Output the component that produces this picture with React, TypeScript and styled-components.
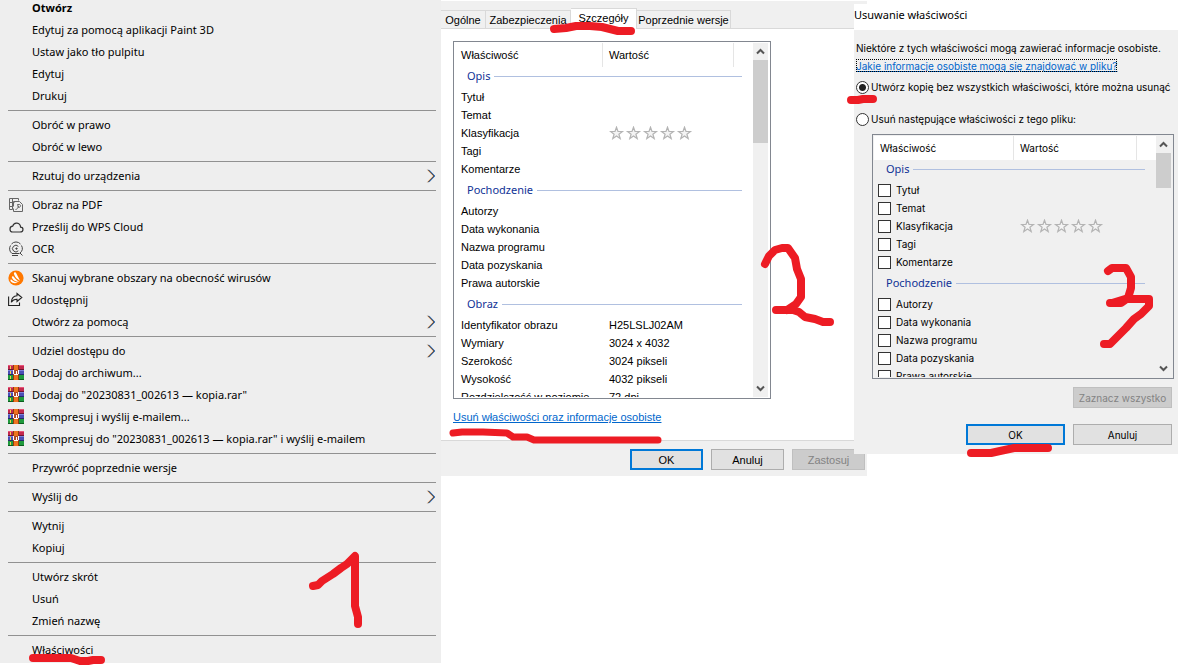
import React, { Fragment } from "react";
import styled, { createGlobalStyle, css } from "styled-components";

const INK = "#ed1c24";
const MENU_FONT = `"Noto Sans", "Open Sans", sans-serif`;
const DIALOG_FONT = `"Liberation Sans", Arial, sans-serif`;
const TAHOMA_FONT = `Inter, "Noto Sans", sans-serif`;

const GlobalStyle = createGlobalStyle`
  *, *::before, *::after { box-sizing: border-box; }
  body { margin: 0; background: #fff; color: #000; }
  button { font: inherit; color: inherit; }
`;

const Desktop = styled.main`
  display: grid;
  grid-template-columns: 441fr 413fr 334fr;
  align-items: start;
  overflow: hidden;
  min-height: 100vh;
`;

/* Hand-drawn marks lie over each window. */
const Marks = styled.svg`
  position: absolute;
  z-index: 3;
  top: 0;
  left: 0;
  overflow: visible;
  pointer-events: none;
  fill: none;
  stroke: ${INK};
  stroke-width: 8;
  stroke-linecap: round;
  stroke-linejoin: round;
`;

/* ---------- Context menu ---------- */

const MenuWindow = styled.section`
  position: relative;
`;

const MenuClip = styled.div`
  overflow: hidden;
  background: #eeeeee;
`;

const MenuList = styled.ul`
  list-style: none;
  margin: -3px 0 0;
  padding: 0 0 2px;
  font: 11px/22px ${MENU_FONT};
`;

const MenuItem = styled.button<{ $bold?: boolean }>`
  display: grid;
  grid-template-columns: 24px 1fr 10px;
  align-items: center;
  width: 100%;
  height: 22px;
  padding: 0 5px 0 8px;
  border: 0;
  background: none;
  text-align: left;
  white-space: nowrap;
  font-weight: ${(p) => (p.$bold ? 700 : 400)};
`;

const IconSlot = styled.span`
  display: flex;
  align-items: center;
  height: 22px;
`;

const Separator = styled.li`
  height: 1px;
  margin: 3px 5px 3px 8px;
  background: #919191;
`;

const PdfIcon = () => (
  <svg width="16" height="16" viewBox="0 0 16 16" fill="none" stroke="#666" strokeWidth="1">
    <path d="M4.500 12.500H1.500V1.500H10.500V3.500M4.500 1.500V12.500M1.500 5.500H6.500M1.500 9.500H4.500" />
    <path d="M5.500 9.500V4.500H11.500L14.500 7.500V14.500H5.500V11.500" />
    <path d="M9.500 7.500H11.500C13.500 8 12.500 10.500 10.500 10.500L9.500 7.500M7.500 12.500C9 12.500 10 11 10.500 9" />
  </svg>
);

const CloudIcon = () => (
  <svg width="16" height="16" viewBox="0 0 16 16" fill="none" stroke="#333" strokeWidth="1.200">
    <path d="M4.600 13H12c3.900 0 3.800-4.600.6-4.800C12.200 3.400 6 2.600 4.700 7.200 1 7.400 1.200 13 4.600 13Z" />
  </svg>
);

const OcrIcon = () => (
  <svg width="16" height="16" viewBox="0 0 16 16" fill="none" stroke="#444" strokeWidth="1">
    <path d="M3.500 3A6 6 0 0 1 12.500 3M2.500 4.500A6 6 0 0 0 4 12.500H11.500M13.500 4.500A6 6 0 0 1 12 12L14.500 14.500M4 14.500H10" />
    <path d="M10.300 5.400A3.300 3.300 0 1 0 10.300 9.800M8.500 6.500V8.700M7.300 7.600H9.700" />
  </svg>
);

const AvastIcon = () => (
  <svg width="16" height="16" viewBox="0 0 16 16">
    <circle cx="8" cy="8" r="7.600" fill="#ff7800" />
    <path d="M6.300 2.600c.8-.6 1.500-.2 1.900.6l3.900 7.500c-2.700-1-5-3.500-5.900-6.100-.3-.9-.4-1.500.1-2Z" fill="#fff" />
    <path d="M4.200 6.400c.6-.4 1.200-.2 1.600.4 1.200 2.200 3 3.800 5.400 4.800-3.100.3-5.700-.9-7-3.300-.4-.8-.5-1.500 0-1.900Z" fill="#fff" />
    <path d="M2.500 9.900c.3-.5.900-.4 1.300 0 1.700 1.700 3.600 2.400 6 2.500-2.400 1.300-5.300 1-6.900-.8-.5-.6-.7-1.200-.4-1.700Z" fill="#fff" />
  </svg>
);

const ShareIcon = () => (
  <svg width="16" height="16" viewBox="0 0 16 16" fill="none" stroke="#222" strokeWidth="1.100">
    <path d="M.6 4.500V13.500H11.500V10.500" />
    <path d="M9 1.500L13.800 5.500L9 9.500V7.300C6.300 7.200 4.600 8.200 3.300 10.300C3.500 6.500 5.600 4 9 3.800Z" />
  </svg>
);

const RarIcon = () => (
  <svg width="16" height="16" viewBox="0 0 16 16" shapeRendering="crispEdges">
    <rect y="0" width="16" height="5" fill="#c2284e" />
    <rect y="0" width="16" height="1" fill="#e8557a" />
    <rect y="4" width="16" height="1" fill="#6d1230" />
    <rect y="5" width="16" height="5" fill="#4a4fb5" />
    <rect y="5" width="16" height="1" fill="#7d82dc" />
    <rect y="9" width="16" height="1" fill="#25296f" />
    <rect y="10" width="16" height="5" fill="#1f9a3c" />
    <rect y="14" width="16" height="1" fill="#0c5c1e" />
    <path d="M2.500 1v3M2.500 6v3M2.500 11v3" stroke="#f3d04c" />
    <rect x="5" width="6" height="15" fill="#8c3b12" />
    <rect x="6" width="4" height="15" fill="#ee7420" />
    <rect x="5" y="5" width="6" height="5" fill="#b04a28" />
    <path d="M5.500 5v4M8 6v3M10.500 5v4M6 9.500h4" stroke="#fff" />
  </svg>
);

const Chevron = () => (
  <svg width="10" height="14" viewBox="0 0 10 14" fill="none" strokeWidth="1">
    <path d="M1.500 .8L7.500 7L1.500 13.200" stroke="#e8a050" />
    <path d="M3 .8L9 7L3 13.200" stroke="#3f8fe0" />
    <path d="M2.200 .8L8.200 7L2.200 13.200" stroke="#2a2030" strokeWidth="0.900" />
  </svg>
);

type Entry = { label: string; icon?: () => React.JSX.Element; sub?: boolean; bold?: boolean };

const MENU: Entry[][] = [
  [
    { label: "Otwórz", bold: true },
    { label: "Edytuj za pomocą aplikacji Paint 3D" },
    { label: "Ustaw jako tło pulpitu" },
    { label: "Edytuj" },
    { label: "Drukuj" },
  ],
  [{ label: "Obróć w prawo" }, { label: "Obróć w lewo" }],
  [{ label: "Rzutuj do urządzenia", sub: true }],
  [
    { label: "Obraz na PDF", icon: PdfIcon },
    { label: "Prześlij do WPS Cloud", icon: CloudIcon },
    { label: "OCR", icon: OcrIcon },
  ],
  [
    { label: "Skanuj wybrane obszary na obecność wirusów", icon: AvastIcon },
    { label: "Udostępnij", icon: ShareIcon },
    { label: "Otwórz za pomocą", sub: true },
  ],
  [
    { label: "Udziel dostępu do", sub: true },
    { label: "Dodaj do archiwum...", icon: RarIcon },
    { label: 'Dodaj do "20230831_002613 — kopia.rar"', icon: RarIcon },
    { label: "Skompresuj i wyślij e-mailem...", icon: RarIcon },
    { label: 'Skompresuj do "20230831_002613 — kopia.rar" i wyślij e-mailem', icon: RarIcon },
  ],
  [{ label: "Przywróć poprzednie wersje" }],
  [{ label: "Wyślij do", sub: true }],
  [{ label: "Wytnij" }, { label: "Kopiuj" }],
  [{ label: "Utwórz skrót" }, { label: "Usuń" }, { label: "Zmień nazwę" }],
  [{ label: "Właściwości" }],
];

function ContextMenu() {
  return (
    <MenuWindow>
      <MenuClip>
        <MenuList>
          {MENU.map((group, g) => (
            <Fragment key={g}>
              {g > 0 && <Separator role="separator" />}
              {group.map(({ label, icon: Icon, sub, bold }) => (
                <li key={label}>
                  <MenuItem type="button" $bold={bold}>
                    <IconSlot>{Icon && <Icon />}</IconSlot>
                    <span>{label}</span>
                    {sub && <Chevron />}
                  </MenuItem>
                </li>
              ))}
            </Fragment>
          ))}
        </MenuList>
      </MenuClip>
      <Marks width="441" height="668" viewBox="0 0 441 668" aria-hidden="true">
        <path d="M313 586L318 585L322 581L333 574L341 568L347 564L355 556V606L358 617V624" />
        <path d="M33 658H71L80 661H88L93 660H101" />
      </Marks>
    </MenuWindow>
  );
}

/* ---------- Shared dialog parts ---------- */

const ButtonRow = styled.div`
  display: flex;
  justify-content: flex-end;
  gap: 8px;
`;

const PushButton = styled.button<{ $wide?: boolean; $primary?: boolean }>`
  width: ${(p) => (p.$wide ? 99 : 73)}px;
  height: 21px;
  padding: 0;
  border: ${(p) => (p.$primary ? "2px solid #0078d7" : "1px solid #adadad")};
  background: #e1e1e1;
  white-space: nowrap;
  &:disabled {
    border-color: #bfbfbf;
    background: #cccccc;
    color: #838383;
  }
`;

const ListBox = styled.div<{ $height: number }>`
  display: flex;
  height: ${(p) => p.$height}px;
  padding: 1px 2px 1px 1px;
  border: 1px solid #828790;
  overflow: hidden;
`;

const ListView = styled.div`
  flex: 1;
  min-width: 0;
  overflow: hidden;
`;

const PropertyTable = styled.table<{ $first: number }>`
  width: 100%;
  table-layout: fixed;
  border-collapse: separate;
  border-spacing: 0;
  white-space: nowrap;
  td, th { padding: 0; text-align: left; font-weight: 400; line-height: 18px; }
  td { height: 18px; }
  td + td { padding-left: 6px; }
  thead th {
    height: 24px;
    padding-left: 6px;
    background: #fff;
    border-right: 1px solid #e5e5e5;
  }
  thead th:first-child { width: ${(p) => p.$first}px; }
  thead td { width: 19px; background: #fff; }
`;

const GroupCell = styled.th<{ $height: number; $lift?: boolean }>`
  && { padding: 0 11px 0 12px; }
  height: ${(p) => p.$height}px;
  ${(p) => p.$lift && css`&& { padding-bottom: 3px; }`}
`;

const GroupTitle = styled.span`
  display: flex;
  align-items: center;
  gap: 4px;
  height: 18px;
  color: #0f3296;
  font: 11px/18px ${MENU_FONT};
  &::after {
    content: "";
    flex: 1;
    height: 1px;
    background: #b0c0e0;
  }
`;

const TrackBox = styled.div`
  display: flex;
  flex-direction: column;
  align-items: center;
  width: 15px;
  background: #f0f0f0;
`;

const ArrowButton = styled.button`
  display: flex;
  align-items: center;
  justify-content: center;
  width: 15px;
  height: 17px;
  padding: 0;
  border: 0;
  background: none;
`;

const Thumb = styled.div<{ $size: number }>`
  width: 15px;
  height: ${(p) => p.$size}px;
  margin-bottom: auto;
  background: #cdcdcd;
`;

function Scrollbar({ thumb }: { thumb: number }) {
  return (
    <TrackBox>
      <ArrowButton type="button" aria-label="W górę">
        <svg width="9" height="7" viewBox="0 0 9 7" fill="none" stroke="#555" strokeWidth="2">
          <path d="M1 5.500L4.500 2L8 5.500" />
        </svg>
      </ArrowButton>
      <Thumb $size={thumb} />
      <ArrowButton type="button" aria-label="W dół">
        <svg width="9" height="7" viewBox="0 0 9 7" fill="none" stroke="#555" strokeWidth="2">
          <path d="M1 1.500L4.500 5L8 1.500" />
        </svg>
      </ArrowButton>
    </TrackBox>
  );
}

const StarRow = styled.svg`
  display: block;
`;

function Stars() {
  return (
    <StarRow width="84" height="14" viewBox="0 0 84 14" role="img" aria-label="Brak oceny">
      {[0, 1, 2, 3, 4].map((i) => (
        <path
          key={i}
          transform={`translate(${i * 17} 0)`}
          d="M7.500 1.200L9 5.500H13.400L9.900 8.200L11.200 12.600L7.500 10L3.800 12.600L5.100 8.200L1.600 5.500H6Z"
          fill="#f4f4f4"
          stroke="#b4b4b4"
          strokeWidth="1.200"
        />
      ))}
    </StarRow>
  );
}

type Group = { title: string; rows: [string, React.ReactNode?][] };

const DESCRIPTION: Group = {
  title: "Opis",
  rows: [["Tytuł"], ["Temat"], ["Klasyfikacja", <Stars key="s" />], ["Tagi"], ["Komentarze"]],
};
const ORIGIN: Group = {
  title: "Pochodzenie",
  rows: [["Autorzy"], ["Data wykonania"], ["Nazwa programu"], ["Data pozyskania"], ["Prawa autorskie"]],
};
const IMAGE: Group = {
  title: "Obraz",
  rows: [
    ["Identyfikator obrazu", "H25LSLJ02AM"],
    ["Wymiary", "3024 x 4032"],
    ["Szerokość", "3024 pikseli"],
    ["Wysokość", "4032 pikseli"],
    ["Rozdzielczość w poziomie", "72 dpi"],
  ],
};

const NameCell = styled.td`
  && { padding-left: 6px; }
`;

const CheckCell = styled.td`
  && { padding-left: 4px; }
`;

const CheckLabel = styled.label`
  display: flex;
  align-items: center;
  gap: 5px;
  height: 18px;
`;

const CheckBox = styled.input`
  appearance: none;
  flex: none;
  width: 13px;
  height: 13px;
  margin: 0;
  border: 1px solid #333;
  background: #fff;
  &:checked { background: #333; }
`;

function Properties({ groups, first, checks }: { groups: Group[]; first: number; checks?: boolean }) {
  return (
    <PropertyTable $first={first}>
      <thead>
        <tr>
          <th scope="col">Właściwość</th>
          <th scope="col">Wartość</th>
          <td />
        </tr>
      </thead>
      <tbody>
        {groups.map((group, g) => (
          <Fragment key={group.title}>
            <tr>
              <GroupCell colSpan={3} scope="colgroup" $height={g === 0 ? 21 : 24} $lift={g === 0}>
                <GroupTitle>{group.title}</GroupTitle>
              </GroupCell>
            </tr>
            {group.rows.map(([name, value]) => (
              <tr key={name}>
                {checks ? (
                  <CheckCell>
                    <CheckLabel>
                      <CheckBox type="checkbox" />
                      {name}
                    </CheckLabel>
                  </CheckCell>
                ) : (
                  <NameCell>{name}</NameCell>
                )}
                <td colSpan={2}>{value}</td>
              </tr>
            ))}
          </Fragment>
        ))}
      </tbody>
    </PropertyTable>
  );
}

/* ---------- File properties dialog ---------- */

const PropertiesWindow = styled.section`
  position: relative;
  margin: 1px -13px 0 0;
  background: #f0f0f0;
  font: 11px/16px ${DIALOG_FONT};
`;

const TabBar = styled.div`
  display: flex;
  align-items: flex-end;
  height: 27px;
`;

const Tab = styled.button<{ $width: number; $active?: boolean }>`
  width: ${(p) => p.$width}px;
  height: 18px;
  padding: 0;
  border: 1px solid #d9d9d9;
  border-width: 1px 1px 0 0;
  background: #f0f0f0;
  white-space: nowrap;
  ${(p) =>
    p.$active &&
    css`
      height: 21px;
      margin-bottom: -1px;
      padding-bottom: 2px;
      z-index: 1;
      background: #fff;
    `}
`;

const TabPage = styled.div`
  padding: 12px 96px 15px 12px;
  border: 1px solid #d9d9d9;
  border-width: 1px 0;
  background: #fff;
`;

const RemoveLink = styled.a`
  display: block;
  width: max-content;
  margin-top: 10px;
  color: #0066cc;
  text-decoration: underline;
`;

const PropertiesFooter = styled(ButtonRow)`
  padding: 8px 2px 6px 0;
`;

function PropertiesDialog() {
  return (
    <PropertiesWindow>
      <TabBar role="tablist">
        <Tab type="button" role="tab" $width={45}>Ogólne</Tab>
        <Tab type="button" role="tab" $width={85}>Zabezpieczenia</Tab>
        <Tab type="button" role="tab" aria-selected="true" $width={66} $active>Szczegóły</Tab>
        <Tab type="button" role="tab" $width={94}>Poprzednie wersje</Tab>
      </TabBar>
      <TabPage>
        <ListBox $height={358}>
          <ListView>
            <Properties groups={[DESCRIPTION, ORIGIN, IMAGE]} first={148} />
          </ListView>
          <Scrollbar thumb={83} />
        </ListBox>
        <RemoveLink href="#usun">Usuń właściwości oraz informacje osobiste</RemoveLink>
      </TabPage>
      <PropertiesFooter>
        <PushButton type="button" $primary>OK</PushButton>
        <PushButton type="button">Anuluj</PushButton>
        <PushButton type="button" disabled>Zastosuj</PushButton>
      </PropertiesFooter>
      <Marks width="426" height="475" viewBox="441 1 426 475" aria-hidden="true">
        <path d="M554 29L566 28L576 26H590L602 27L610 29L618 31H631" />
        <path d="M765 264L769 256L775 250L782 248H788L795 258L797 269L801 279V297L796 304L787 310" />
        <path d="M776 310H793L799 312L805 317L815 319L823 322H830" />
        <path d="M453 433L462 432H483L507 433L513 437H527L534 440H658" strokeWidth="7" />
      </Marks>
    </PropertiesWindow>
  );
}

/* ---------- Remove properties dialog ---------- */

const RemoveWindow = styled.section`
  position: relative;
  z-index: 4;
  margin: 4px 10px 0 0;
  background: #f0f0f0;
  font: 10px/18px ${TAHOMA_FONT};
`;

const TitleBar = styled.h2`
  height: 26px;
  margin: 0;
  background: #fff;
  font: 11px/22px ${MENU_FONT};
`;

const RemoveBody = styled.div`
  padding: 9px 4px 9px 2px;
`;

const Intro = styled.p`
  margin: 0;
  white-space: nowrap;
`;

const InfoLink = styled.a`
  display: block;
  width: max-content;
  height: 13px;
  margin-top: 2px;
  outline: 1px dotted #000;
  outline-offset: -1px;
  color: #0066cc;
  line-height: 14px;
  text-decoration: underline;
`;

const RadioLabel = styled.label<{ $gap: number }>`
  display: flex;
  align-items: center;
  gap: 2px;
  height: 18px;
  margin-top: ${(p) => p.$gap}px;
  white-space: nowrap;
`;

const Radio = styled.input`
  appearance: none;
  flex: none;
  width: 13px;
  height: 13px;
  margin: 0;
  border: 1px solid #333;
  border-radius: 50%;
  background: #fff;
  &:checked {
    background: radial-gradient(circle, #222 0 3px, #fff 4px);
  }
`;

const IndentedList = styled.div`
  margin: 6px 0 8px 16px;
`;

const RemoveActions = styled(ButtonRow)`
  margin: 0 2px;
  & + & { margin-top: 16px; }
`;

function RemoveDialog() {
  return (
    <RemoveWindow>
      <TitleBar>Usuwanie właściwości</TitleBar>
      <RemoveBody>
        <Intro>Niektóre z tych właściwości mogą zawierać informacje osobiste.</Intro>
        <InfoLink href="#informacje">Jakie informacje osobiste mogą się znajdować w pliku?</InfoLink>
        <RadioLabel $gap={6}>
          <Radio type="radio" name="mode" defaultChecked />
          Utwórz kopię bez wszystkich właściwości, które można usunąć
        </RadioLabel>
        <RadioLabel $gap={14}>
          <Radio type="radio" name="mode" />
          Usuń następujące właściwości z tego pliku:
        </RadioLabel>
        <IndentedList>
          <ListBox $height={245}>
            <ListView>
              <Properties groups={[DESCRIPTION, ORIGIN]} first={140} checks />
            </ListView>
            <Scrollbar thumb={35} />
          </ListBox>
        </IndentedList>
        <RemoveActions>
          <PushButton type="button" $wide disabled>Zaznacz wszystko</PushButton>
        </RemoveActions>
        <RemoveActions>
          <PushButton type="button" $wide $primary>OK</PushButton>
          <PushButton type="button" $wide>Anuluj</PushButton>
        </RemoveActions>
      </RemoveBody>
      <Marks width="324" height="450" viewBox="854 4 324 450" aria-hidden="true">
        <path d="M851 100H858L863 99H873" />
        <path d="M1108 271L1112 268H1126L1131 277V288L1128 298L1121 303H1110" />
        <path d="M1112 303L1125 299H1149V306L1141 314L1134 319L1126 328L1110 344H1104" />
        <path d="M971 453H991L1000 451L1014 448H1048" />
      </Marks>
    </RemoveWindow>
  );
}

export default function App() {
  return (
    <>
      <GlobalStyle />
      <Desktop>
        <ContextMenu />
        <PropertiesDialog />
        <RemoveDialog />
      </Desktop>
    </>
  );
}
